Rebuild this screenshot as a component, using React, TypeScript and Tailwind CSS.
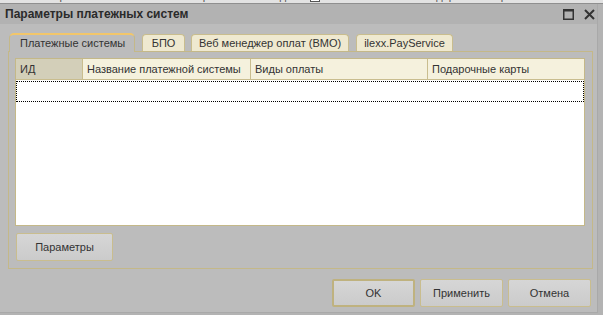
import React from "react";

const Tab = ({ label, active, w }: { label: string; active?: boolean; w: string }) =>
  active ? (
    <div
      className={`${w} h-[19px] -mb-px relative z-10 flex items-center pl-[10px] whitespace-nowrap text-[11px] text-[#333] bg-[#bcbcbc] border border-b-0 border-[#c4b888] border-t-2 border-t-[#f2c66a] rounded-t-[5px]`}
    >
      {label}
    </div>
  ) : (
    <div
      className={`${w} h-[17px] flex items-center justify-center whitespace-nowrap text-[11px] text-[#333] bg-[#efe9d0] border border-b-0 border-[#c9bd8e] rounded-t-[4px]`}
    >
      {label}
    </div>
  );

const Btn = ({ label, def, w }: { label: string; def?: boolean; w: string }) => (
  <div
    className={`${w} h-[28px] flex items-center justify-center whitespace-nowrap text-[11px] text-[#333] rounded-[2px] bg-gradient-to-b from-[#d6d6d6] to-[#cbcbcb] ${
      def ? "border-2 border-[#bfb27f]" : "border border-[#c9bd8e]"
    }`}
  >
    {label}
  </div>
);

export default function App() {
  return (
    <div className="w-[603px] h-[315px] bg-[#b3b3b3] flex flex-col overflow-hidden font-['Liberation_Sans',Arial,sans-serif]">
      {/* background window strip */}
      <div className="h-[4px] shrink-0 bg-[#e2e2e2] border-b border-[#8f8f8f] overflow-hidden flex whitespace-nowrap text-[11px] text-[#555] leading-[13px]">
        <div className="-mt-[10px] ml-[35px] w-[275px]">Настройка заполнения остатка при оплате вкладов</div>
        <div className="-mt-[10px] flex gap-[4px]">
          <span className="w-[10px] h-[10px] border border-[#555] bg-white inline-block mt-[2px]" />
          Использовать свои подарочные карты
        </div>
      </div>
      <div className="w-[598px] h-[309px] shrink-0 bg-[#bcbcbc] border-r border-b border-[#a9a9a9] flex flex-col">
        {/* title bar */}
        <div className="h-[20px] shrink-0 bg-[#b2b2b2] flex items-center justify-between pl-[5px] pr-[2px]">
          <div className="text-[12px] font-bold text-[#2a2a2a] whitespace-nowrap">Параметры платежных систем</div>
          <div className="flex items-center gap-[10px]">
            <svg width="11" height="11" viewBox="0 0 11 11">
              <rect x="0.75" y="0.75" width="9.5" height="9.5" fill="none" stroke="#333" strokeWidth="1.5" />
              <line x1="0" y1="1.5" x2="11" y2="1.5" stroke="#333" strokeWidth="2" />
            </svg>
            <svg width="11" height="11" viewBox="0 0 11 11">
              <path d="M1 1 L10 10 M10 1 L1 10" stroke="#333" strokeWidth="2" />
            </svg>
          </div>
        </div>
        {/* content */}
        <div className="pl-[8px] pr-[5px] pt-[8px] flex flex-col">
          <div className="flex items-end h-[19px] pl-[1px]">
            <Tab label="Платежные системы" active w="w-[126px]" />
            <div className="w-[7px]" />
            <Tab label="БПО" w="w-[43px]" />
            <div className="w-[6px]" />
            <Tab label="Веб менеджер оплат (ВМО)" w="w-[158px]" />
            <div className="w-[7px]" />
            <Tab label="ilexx.PayService" w="w-[97px]" />
          </div>
          <div className="w-[585px] h-[218px] border border-[#c4b888] flex flex-col pl-[6px] pt-[6px]">
            {/* table */}
            <div className="w-[570px] h-[168px] border border-[#c4b888] bg-white flex flex-col">
              <div className="h-[21px] shrink-0 flex whitespace-nowrap text-[11px] text-[#333] bg-[#f5f1dd] border-b border-[#c9bd8e]">
                <div className="w-[67px] bg-[#d3cfb9] border-r border-[#c9bd8e] flex items-center pl-[4px]">ИД</div>
                <div className="w-[168px] border-r border-[#c9bd8e] flex items-center pl-[4px]">Название платежной системы</div>
                <div className="w-[177px] border-r border-[#c9bd8e] flex items-center pl-[4px]">Виды оплаты</div>
                <div className="flex-1 flex items-center pl-[4px]">Подарочные карты</div>
              </div>
              <div className="h-[21px] mt-px border border-dotted border-black" />
            </div>
            <div className="mt-[7px] ml-px">
              <Btn label="Параметры" w="w-[97px]" />
            </div>
          </div>
          <div className="flex justify-end gap-[5px] mt-[10px] pr-[1px]">
            <Btn label="OK" def w="w-[83px]" />
            <Btn label="Применить" w="w-[83px]" />
            <Btn label="Отмена" w="w-[83px]" />
          </div>
        </div>
      </div>
    </div>
  );
}
